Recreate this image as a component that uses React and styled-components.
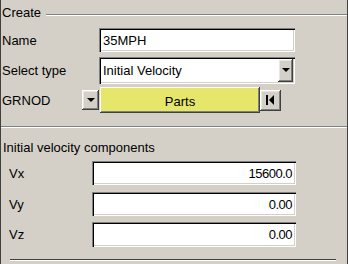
import styled, { createGlobalStyle } from 'styled-components'

const Global = createGlobalStyle`
    html, body {
        margin: 0;
        padding: 0;
        background: #D4D0C8;
    }
`

const sunken = `
    background-color: #FFFFFF;
    box-shadow: inset 1px 1px #808080, inset 2px 2px #000000, inset -1px -1px #FFFFFF, inset -2px -2px #D4D0C8;
`

const raised = `
    background-color: #D4D0C8;
    box-shadow: inset -1px -1px #404040, inset 1px 1px #FFFFFF, inset -2px -2px #808080, inset 2px 2px #E8E6E0;
`

export default function App(){
    const components = [
        { name: 'Vx', value: '15600.0', gap: 0 },
        { name: 'Vy', value: '0.00', gap: 7 },
        { name: 'Vz', value: '0.00', gap: 6 },
    ]

    return(
        <>
            <Global />
            <Panel>
                <Legend>
                    <LegendText>Create</LegendText>
                    <Groove />
                </Legend>

                <Row top={8}>
                    <Label width={98}>Name</Label>
                    <TextField>35MPH</TextField>
                </Row>

                <Row top={6}>
                    <Label width={98}>Select type</Label>
                    <Select>
                        <span>Initial Velocity</span>
                        <DropButton>
                            <DownArrow />
                        </DropButton>
                    </Select>
                </Row>

                <Row top={5} height={26}>
                    <Label width={81}>GRNOD</Label>
                    <SmallButton>
                        <DownArrow />
                    </SmallButton>
                    <PartsButton>Parts</PartsButton>
                    <FirstButton>
                        <svg width="9" height="10" viewBox="0 0 9 10">
                            <rect x="0" y="0" width="2" height="10" fill="#000" />
                            <polygon points="8,0 8,10 3,5" fill="#000" />
                        </svg>
                    </FirstButton>
                </Row>

                <Divider />

                <SectionTitle>Initial velocity components</SectionTitle>

                {components.map(c => (
                    <Row key={c.name} top={c.gap} height={c.name === 'Vz' ? 25 : 24}>
                        <VLabel>{c.name}</VLabel>
                        <NumberField>{c.value}</NumberField>
                    </Row>
                ))}

                <BottomLine />
            </Panel>
        </>
    )
}

const Panel = styled.div`
    width: 348px;
    height: 264px;
    box-sizing: border-box;
    border-left: 1px solid #404040;
    border-right: 1px solid #404040;
    background-color: #D4D0C8;
    font-family: 'Liberation Sans', Arial, sans-serif;
    font-size: 13px;
    color: #000000;
    display: flex;
    flex-direction: column;
    overflow: hidden;
`

const Legend = styled.div`
    display: flex;
    align-items: flex-start;
    padding-top: 5px;
    height: 15px;
`

const LegendText = styled.div`
    line-height: 15px;
    padding-left: 1px;
    margin-right: 5px;
`

const Groove = styled.div`
    flex: 1;
    margin-top: 9px;
    height: 1px;
    background-color: #808080;
    border-bottom: 1px solid #FFFFFF;
`

const Row = styled.div`
    display: flex;
    align-items: center;
    margin-top: ${props => props.top}px;
    height: ${props => props.height || 24}px;
`

const Label = styled.div`
    width: ${props => props.width}px;
    padding-left: 1px;
    box-sizing: border-box;
    flex-shrink: 0;
`

const TextField = styled.div`
    ${sunken}
    width: 196px;
    height: 24px;
    box-sizing: border-box;
    padding-left: 4px;
    display: flex;
    align-items: center;
`

const Select = styled.div`
    ${sunken}
    width: 196px;
    height: 27px;
    box-sizing: border-box;
    padding: 2px 2px 2px 4px;
    display: flex;
    align-items: center;
    justify-content: space-between;
`

const DropButton = styled.div`
    ${raised}
    width: 15px;
    height: 100%;
    display: flex;
    align-items: center;
    justify-content: center;
`

const DownArrow = styled.div`
    width: 0;
    height: 0;
    border-left: 4px solid transparent;
    border-right: 4px solid transparent;
    border-top: 4px solid #000000;
`

const SmallButton = styled.div`
    ${raised}
    width: 17px;
    height: 20px;
    display: flex;
    align-items: center;
    justify-content: center;
    margin-right: 1px;
`

const PartsButton = styled.div`
    width: 160px;
    height: 26px;
    box-sizing: border-box;
    background-color: #E6E66A;
    box-shadow: inset -1px -1px #404040, inset 1px 1px #FFFFFF, inset -2px -2px #808080;
    display: flex;
    align-items: center;
    justify-content: center;
    padding-top: 2px;
`

const FirstButton = styled.div`
    ${raised}
    width: 21px;
    height: 21px;
    display: flex;
    align-items: center;
    justify-content: center;
`

const Divider = styled.div`
    margin-top: 13px;
    height: 1px;
    background-color: #808080;
    border-bottom: 1px solid #FFFFFF;
`

const SectionTitle = styled.div`
    margin-top: 12px;
    line-height: 15px;
    padding-left: 2px;
    margin-bottom: 6px;
`

const VLabel = styled.div`
    width: 91px;
    padding-left: 8px;
    box-sizing: border-box;
    flex-shrink: 0;
`

const NumberField = styled.div`
    ${sunken}
    width: 204px;
    height: 100%;
    box-sizing: border-box;
    padding-right: 4px;
    display: flex;
    align-items: center;
    justify-content: flex-end;
    letter-spacing: -0.5px;
`

const BottomLine = styled.div`
    margin: 12px 11px 0 9px;
    height: 1px;
    background-color: #404040;
    border-bottom: 1px solid #FFFFFF;
`
